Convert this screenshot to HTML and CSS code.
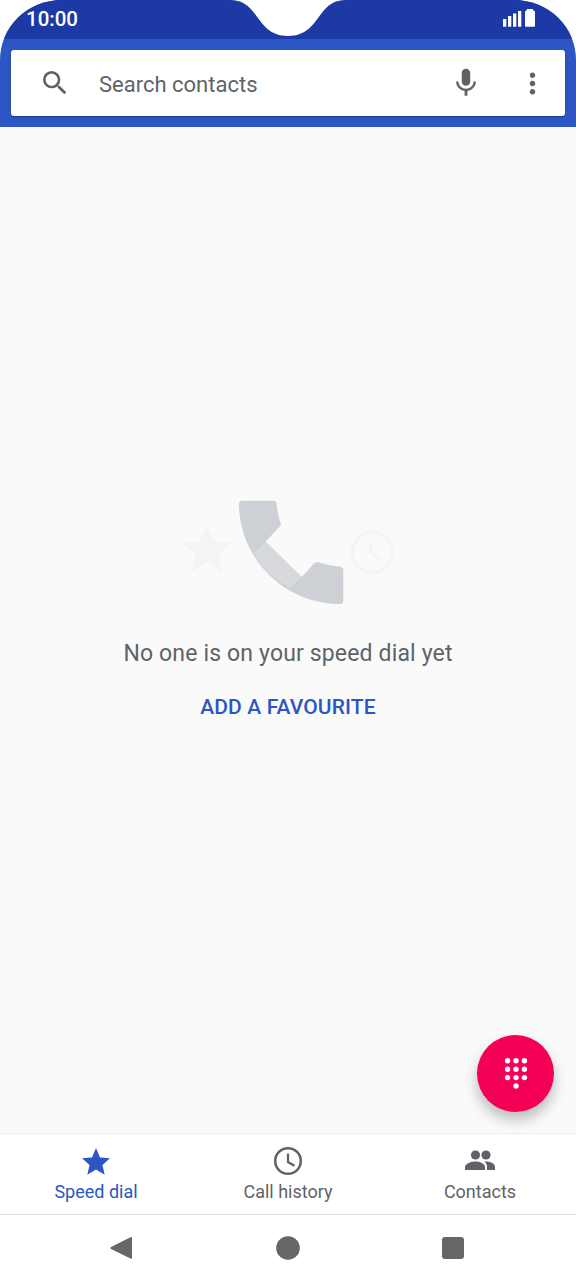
FILE: index.html
```html
<!DOCTYPE html>
<html lang="en">
<head>
    <meta charset="UTF-8">
    <meta name="viewport" content="width=device-width, initial-scale=1.0">
    <title>Phone</title>
    <link rel="stylesheet" href="styles.css">
</head>
<body>
    <div class="phone">
        <header class="header">
            <div class="status-bar">
                <span class="time">10:00</span>
                <svg class="notch" width="120" height="39" viewBox="0 0 120 39">
                    <path d="M2 0C14 0 20 5 27 14C35 25 42 36 60 36C78 36 85 25 93 14C100 5 106 0 118 0Z" fill="#fff"/>
                </svg>
                <svg class="signal" width="36" height="22" viewBox="0 0 36 22">
                    <rect x="1" y="11" width="3.300" height="7.700" fill="#fff"/>
                    <rect x="6" y="8" width="3.300" height="10.700" fill="#fff"/>
                    <rect x="11" y="5.500" width="3.300" height="13.200" fill="#fff"/>
                    <rect x="16" y="3" width="3.300" height="15.700" fill="#fff"/>
                    <path d="M24 18.700a1 1 0 0 1-1-1V4c0-1 .8-1.500 2-1.800V1h6v1.200c1.200.3 2 .8 2 1.800v13.700a1 1 0 0 1-1 1Z" fill="#fff"/>
                </svg>
            </div>
            <div class="search-band">
                <div class="search-box">
                    <svg class="search-icon" width="32" height="32" viewBox="0 0 24 24">
                        <path d="M15.500 14h-.79l-.28-.27A6.470 6.470 0 0 0 16 9.500 6.500 6.500 0 1 0 9.500 16c1.610 0 3.090-.59 4.230-1.570l.27.28v.79l5 4.990L20.490 19l-4.990-5zm-6 0C7.010 14 5 11.990 5 9.500S7.010 5 9.500 5 14 7.010 14 9.500 11.990 14 9.500 14z" fill="#5f6368"/>
                    </svg>
                    <span class="search-text">Search contacts</span>
                    <svg class="mic-icon" width="34" height="34" viewBox="0 0 24 24">
                        <path d="M12 14c1.660 0 3-1.340 3-3V5c0-1.660-1.340-3-3-3S9 3.340 9 5v6c0 1.660 1.340 3 3 3zm5.300-3c0 3-2.540 5.100-5.300 5.100S6.700 14 6.700 11H5c0 3.410 2.720 6.230 6 6.720V21h2v-3.280c3.280-.48 6-3.300 6-6.720h-1.700z" fill="#5f6368"/>
                    </svg>
                    <svg class="more-icon" width="33" height="33" viewBox="0 0 24 24">
                        <path d="M12 8c1.100 0 2-.9 2-2s-.9-2-2-2-2 .9-2 2 .9 2 2 2zm0 2c-1.100 0-2 .9-2 2s.9 2 2 2 2-.9 2-2-.9-2-2-2zm0 6c-1.100 0-2 .9-2 2s.9 2 2 2 2-.9 2-2-.9-2-2-2z" fill="#5f6368"/>
                    </svg>
                </div>
            </div>
        </header>

        <main class="content">
            <div class="empty-art">
                <svg width="220" height="112" viewBox="4 0 220 112">
                    <path d="M33 27.500l7.200 15.700 17 1.800-12.700 11.400 3.600 16.800-15.100-8.600-15.100 8.600 3.600-16.800L8.200 45l17-1.800z" fill="#f3f4f5"/>
                    <circle cx="198.300" cy="54.300" r="20" fill="none" stroke="#f3f4f5" stroke-width="3.500"/>
                    <path d="M197 43.700V55l10.700 7" fill="none" stroke="#f3f4f5" stroke-width="2.500"/>
                    <path d="M68 2.700H100a3 3 0 0 1 2.700 2.700C103 13 105 20 107 27L91.700 43.700L127.700 79L140 65.500Q141.500 63.700 143.500 64C150 66 158 68 167 69Q169.300 69.500 169.300 72V103a3 3 0 0 1-3 3C110 106 65 60 65 5.700a3 3 0 0 1 3-3Z" fill="#cdd0d4"/>
                    <path d="M91.700 43.700L127.700 79L116 90.300C100 81 88 70 79.300 55.300Z" fill="#d7d9dc"/>
                </svg>
            </div>
            <p class="empty-text">No one is on your speed dial yet</p>
            <a class="empty-link">ADD A FAVOURITE</a>
            <div class="fab">
                <svg width="26" height="31" viewBox="0 0 26 31">
                    <g fill="#fff">
                        <circle cx="4.600" cy="2.800" r="2.700"/><circle cx="13" cy="2.800" r="2.700"/><circle cx="21.400" cy="2.800" r="2.700"/>
                        <circle cx="4.600" cy="11.200" r="2.700"/><circle cx="13" cy="11.200" r="2.700"/><circle cx="21.400" cy="11.200" r="2.700"/>
                        <circle cx="4.600" cy="19.600" r="2.700"/><circle cx="13" cy="19.600" r="2.700"/><circle cx="21.400" cy="19.600" r="2.700"/>
                        <circle cx="13" cy="28" r="2.700"/>
                    </g>
                </svg>
            </div>
        </main>

        <nav class="tabs">
            <div class="tab tab-active">
                <svg width="32" height="32" viewBox="0 0 32 32">
                    <path d="M16 3l4 9.500 10 .8-7.600 6.600 2.300 9.900L16 24.500l-8.700 5.300 2.300-9.900L2 13.300l10-.8z" fill="#2b56c4"/>
                </svg>
                <span>Speed dial</span>
            </div>
            <div class="tab">
                <svg width="32" height="32" viewBox="0 0 32 32">
                    <circle cx="16" cy="16" r="12.800" fill="none" stroke="#5f6368" stroke-width="2.500"/>
                    <path d="M16 8.500V17l6.500 3.800" fill="none" stroke="#5f6368" stroke-width="2.200"/>
                </svg>
                <span>Call history</span>
            </div>
            <div class="tab">
                <svg width="32" height="32" viewBox="0 0 32 32">
                    <g fill="#5f6368">
                        <circle cx="11.500" cy="10" r="4.600"/>
                        <circle cx="22" cy="10" r="4.600"/>
                        <path d="M1 25v-3c0-3.500 6.500-5.500 10.500-5.500S21 18.500 21 22v3Z"/>
                        <path d="M23 25v-3.500c0-1.800-.9-3.300-2.600-4.700.6-.1 1.200-.2 1.800-.2 3.400 0 8.800 1.900 8.800 5.200V25Z"/>
                    </g>
                </svg>
                <span>Contacts</span>
            </div>
        </nav>

        <footer class="nav-bar">
            <svg class="nav-back" width="26" height="26" viewBox="0 0 26 26">
                <path d="M22.500 2.300a1 1 0 0 1 1.500 1V22.700a1 1 0 0 1-1.500.9L3 14a1.200 1.200 0 0 1 0-2Z" fill="#666"/>
            </svg>
            <svg class="nav-home" width="26" height="26" viewBox="0 0 26 26">
                <circle cx="13" cy="13" r="11.800" fill="#666"/>
            </svg>
            <svg width="26" height="26" viewBox="0 0 26 26">
                <rect x="2" y="2" width="22" height="22" rx="3" fill="#666"/>
            </svg>
        </footer>
    </div>
</body>
</html>
```

FILE: styles.css
```css
body {
    margin: 0;
    background-color: #fff;
    font-family: Roboto, "Liberation Sans", sans-serif;
}

.phone {
    position: relative;
    display: flex;
    flex-direction: column;
    width: 576px;
    height: 1280px;
    overflow: hidden;
}

.header {
    height: 127px;
    flex-shrink: 0;
    background-color: #2b56c4;
    border-radius: 62px 62px 0 0 / 60px 60px 0 0;
    overflow: hidden;
}

.status-bar {
    position: relative;
    display: flex;
    justify-content: space-between;
    align-items: center;
    height: 39px;
    padding: 0 38px 0 26px;
    background-color: #1c39a6;
}

.time {
    padding-bottom: 2px;
    color: #fff;
    font-size: 20.500px;
    font-weight: 500;
}

.notch {
    position: absolute;
    top: 0;
    left: 228px;
}

.signal {
    margin-top: -1px;
}

.search-band {
    padding: 11px;
}

.search-box {
    display: flex;
    align-items: center;
    height: 66px;
    padding: 0 16px 0 28px;
    background-color: #fff;
    border-radius: 3px;
    box-shadow: 0 1px 2px rgba(0, 0, 0, 0.3);
}

.search-text {
    flex: 1;
    margin-left: 28px;
    padding-top: 2px;
    color: #5f6368;
    font-size: 22px;
}

.more-icon {
    margin-left: 33px;
}

.content {
    position: relative;
    flex: 1;
    display: flex;
    flex-direction: column;
    align-items: center;
    padding-top: 371px;
    background-color: #fafafa;
}

.empty-art {
    height: 112px;
}

.empty-art svg {
    display: block;
}

.empty-text {
    margin: 31px 0 0;
    color: #5f6368;
    font-size: 23px;
    letter-spacing: 0.15px;
    line-height: 26px;
}

.empty-link {
    margin-top: 27px;
    color: #2b56c4;
    font-size: 21px;
    font-weight: 500;
    letter-spacing: 0.12px;
    line-height: 26px;
}

.fab {
    position: absolute;
    top: 908px;
    left: 477px;
    display: flex;
    justify-content: center;
    align-items: center;
    width: 77px;
    height: 77px;
    background-color: #f50057;
    border-radius: 50%;
    box-shadow: 0 8px 14px rgba(0, 0, 0, 0.25);
}

.tabs {
    display: flex;
    flex-shrink: 0;
    height: 80px;
    background-color: #fff;
    border-top: 1px solid #eee;
    border-bottom: 1px solid #e0e0e0;
}

.tab {
    flex: 1;
    display: flex;
    flex-direction: column;
    align-items: center;
    padding-top: 11px;
    color: #5f6368;
    font-size: 18px;
    line-height: 22px;
}

.tab svg {
    display: block;
    margin-bottom: 4px;
}

.tab-active {
    color: #2b56c4;
}

.nav-bar {
    display: flex;
    justify-content: center;
    align-items: center;
    gap: 140px;
    flex-shrink: 0;
    height: 65px;
    padding-right: 2px;
    background-color: #fff;
}

.nav-back {
    margin-right: 1px;
}

.nav-home {
    margin-right: -1px;
}
```
